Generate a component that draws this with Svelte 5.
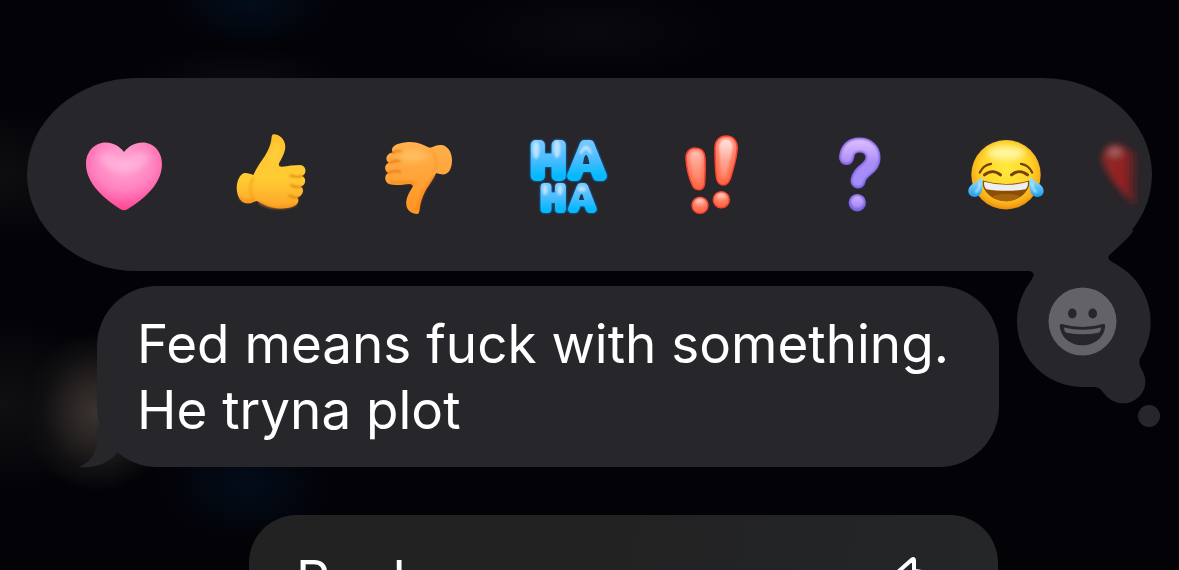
<script>
  const message = ['Fed means fuck with something.', 'He tryna plot'];
  const reactions = ['Heart', 'Like', 'Dislike', 'Laugh', 'Emphasize', 'Question', 'Tears of joy', 'Red heart'];
</script>

{#snippet heart()}
  <path fill="url(#pinkHeart)" d="M50 28C45 22 39 18.500 32 18.500 20 18.500 12 28 12 40c0 20 19 35 34.500 45.200q3.500 2 7 0C70 75 88 60 88 40c0-12-8-21.500-19.500-21.500C61 18.500 55 22 50 28Z" />
  <path d="M24 34q5-8 14-4l12 9 12-9q9-4 14 4-10 15-26 15T24 34Z" fill="#ffc0e0" opacity=".5" filter="url(#mid)" />
{/snippet}

{#snippet thumbUp()}
  <path fill="url(#yellowHand)" d="M52.300 10.200C58 10 64.500 15 64.300 23 64 30 59.500 36 58 39.500c-.5 2 .5 3.200 2.700 3.200C67 42 73 41 79 41c7 .5 7 9.500 1.700 11 5.300 1.500 4.300 9.500-1 10.700 4.500 2 2 9.500-3.400 10.600 2.500 3.500.7 7-3.300 8.700-5 2.300-11 2.800-17.300 2.300-8-.8-14-4.500-20-7.300-3 .5-6 2.800-10 2.300-6-.7-10-7.300-10-15 0-7 3-13.500 7-15 3.300-.8 6.600.7 9.600 1.700C35 45.500 38 40 42.300 34.300 46.500 28 50 21 50.500 14c.2-2 .5-3.500 1.800-3.800Z" />
  <path d="M33 53c-4 6-5 15 0 23" fill="none" stroke="#f09a16" stroke-width="3" opacity=".45" filter="url(#fine)" />
  <path d="M69 51.500q6 2 12 .6M70 61q5 3 10 1.700M68 71.500q5 3 9 1.900" fill="none" stroke="#e5780c" stroke-width="1.600" stroke-linecap="round" filter="url(#fine)" />
  <path d="M38 78q10 6 20 5.500 11 0 17-3.500M19 73q3 5 8 4.500l7-2" fill="none" stroke="#f48a1a" stroke-width="3" opacity=".6" filter="url(#fine)" />
  <path d="M57 19q0 10-8 20" fill="none" stroke="#ffe05a" stroke-width="5" opacity=".5" filter="url(#mid)" />
{/snippet}

{#snippet thumbDown()}
  <path fill="url(#orangeHand)" d="M24.700 28.700C21.500 22 29 19 40.300 18 50 17.500 56 21.500 62 23.700c4-1 7-3.200 11.700-2.700C80 22 84 28.500 84 36c0 7.500-2.500 13-7 14.300-3 .5-6-.5-9-1-2.500 6-7 11-11 18.400-3 5.500-4.500 11-5.200 16.600-.3 3-.8 5.700-2.500 5.700-5 .3-10.300-3.500-11-9-.6-7.500 3-12.500 6.400-18.300.5-1.800-1-2.700-3.700-2.700-6 .5-13 2-19.300.3-5-1.200-6.300-9.300-1.400-11.300-4.300-2-4.300-9 .7-10.300-4.500-2.500-3-9 2.700-10Z" />
  <path d="M24.700 28.700q5-2.700 9-1.200M22 38.700q5-2.500 10-1.500M20.300 49q5-3 12-1.500" fill="none" stroke="#e96a04" stroke-width="1.600" stroke-linecap="round" filter="url(#fine)" />
  <path d="M64 26q6 9 4 21" fill="none" stroke="#f58a1e" stroke-width="2" opacity=".45" filter="url(#fine)" />
  <path d="M22 58q10 1 22 0l3 3M66 51q-3 6-9 14-5 9-7 20" fill="none" stroke="#f3700a" stroke-width="2" opacity=".55" filter="url(#fine)" />
  <ellipse cx="45" cy="32" rx="14" ry="6" fill="#ffc76c" opacity=".7" filter="url(#mid)" />
{/snippet}

{#snippet laugh()}
  <text class="haha" x="17 57" y="52" font-size="45" stroke-width="10">HA</text>
  <text class="haha" x="27 57" y="85" font-size="31" stroke-width="8">HA</text>
  <g fill="#1d3a52">
    <path d="M71 31q2 0 3.500 9h-6.500q1-9 3-9Z" />
    <path d="M66.500 70q1.500 0 2.500 6h-5q1-6 2.500-6Z" />
  </g>
  <g fill="#d6edff" opacity=".75" filter="url(#fine)">
    <ellipse cx="21" cy="26" rx="3.500" ry="9" />
    <ellipse cx="42" cy="25" rx="3.500" ry="9" />
    <path d="M66 26q4-8 9-2l2 6h-2q-4-8-8 0h-3Z" />
    <ellipse cx="30" cy="66" rx="2.500" ry="5" />
    <ellipse cx="45" cy="66" rx="2.500" ry="5" />
    <ellipse cx="67" cy="65" rx="4" ry="2.500" />
  </g>
{/snippet}

{#snippet emphasize()}
  <g fill="url(#redMark)" stroke="#f8412f" stroke-width="1.500">
    <path d="M33 24c-6 0-9.500 5-9 11 .6 9 3 19 6.500 26.500C32 65 34 65.700 37 65.700c4 0 5.500-3 5.700-8 .4-8 .8-16 .3-24-.4-6-4-9.700-10-9.700Z" />
    <path d="M64.500 12c-7 0-11.500 4.500-11.500 12 0 10 .2 19 1.200 28 .6 6 2.800 9 7 9 4.500 0 6.500-3.500 8-9 2.500-9 5.800-19 6-28 .2-7-4.200-12-10.700-12Z" />
    <circle cx="38" cy="81.300" r="8" />
    <circle cx="59.300" cy="75.700" r="8" />
  </g>
  <g fill="url(#redShine)" filter="url(#fine)">
    <path d="M33 27c-4 0-5.500 4-5 9l4 22h7l1-22c0-6-2-9-7-9ZM64 15c-5 0-7 4-7 9l2 30h5l7-30c0-6-3-9-7-9Z" />
    <ellipse cx="38" cy="79" rx="5" ry="4" />
    <ellipse cx="59.300" cy="73.500" rx="5" ry="4" />
  </g>
{/snippet}

{#snippet question()}
  <g fill="none" stroke-linecap="round" stroke-linejoin="round">
    <path d="M37.500 33.500C38.500 25 43 21 50.500 21c8 0 13.500 5 13.500 12.500 0 12-13.500 12-15 23.500" stroke="#7a60dc" stroke-width="15" />
    <path d="M37.500 33C38.500 25 43 21 50.500 21c8 0 13.500 5 13.500 12.500 0 12-13.500 12-15 23" stroke="url(#purpleMark)" stroke-width="12" filter="url(#fine)" />
  </g>
  <circle cx="48.300" cy="78.700" r="8.700" fill="#7b60df" />
  <circle cx="48.300" cy="78" r="6.500" fill="url(#purpleDot)" filter="url(#fine)" />
{/snippet}

{#snippet joy()}
  <circle cx="50" cy="50.700" r="34.700" fill="url(#face)" />
  <ellipse cx="50" cy="29" rx="19" ry="7" fill="#fffdbb" opacity=".8" filter="url(#mid)" />
  <g fill="none" stroke="#754007" stroke-linecap="round">
    <path d="M23.800 48.500C26 43.500 30 40.500 35 39.800M76.200 48.500C74 43.500 70 40.500 65 39.800" stroke-width="2.200" />
    <path d="M28.500 50.800c5-4.200 11-4.200 16 0M55.500 50.800c5-4.200 11-4.200 16 0" stroke-width="3" />
  </g>
  <path d="M26.700 56.500q23.300 7 46.600 0C75 66 64 77.200 50 77.200S25 66 26.700 56.500Z" fill="#8b4e06" />
  <path d="M36 72q14-4 28 0-6 5.200-14 5.200T36 72Z" fill="#b16d0b" opacity=".7" />
  <path d="M28.200 57.800q21.800 6 43.600 0c.6 3-.4 6-2.300 7.500-12 2-27 2-39 0-1.900-1.500-2.900-4.500-2.300-7.500Z" fill="#eeedf2" />
  <path d="M26.300 53c.5 6 .7 14-2.300 17.600-3 3.500-8.500 3-10.700-.3-2.200-3.800-.4-8 3.700-10.600Q22 57 26.300 53Z" fill="url(#tearFill)" />
  <path d="M73.700 53c-.5 6-.7 14 2.300 17.600 3 3.500 8.500 3 10.700-.3 2.200-3.800.4-8-3.700-10.600Q78 57 73.700 53Z" fill="url(#tearFill)" />
  <path d="M24 59q0 6-4 9M76 59q0 6 4 9" stroke="#e2f8ff" stroke-width="2" stroke-linecap="round" fill="none" opacity=".8" filter="url(#fine)" />
{/snippet}

{#snippet fadingHeart()}
  <g filter="url(#haze)">
    <path d="M0 39C-3 29 4 19 13 20c8 1 10 7 19 7l3 8-1 45h-5C20 69 6 56 0 39Z" fill="url(#darkRed)" />
    <ellipse cx="12" cy="28" rx="7" ry="5" fill="#a98482" opacity=".6" />
  </g>
{/snippet}

<svg class="defs" aria-hidden="true">
  <defs>
    <filter id="mid" x="-50%" y="-50%" width="200%" height="200%"><feGaussianBlur stdDeviation="3" /></filter>
    <filter id="fine" x="-50%" y="-50%" width="200%" height="200%"><feGaussianBlur stdDeviation="1" /></filter>
    <filter id="haze" x="-50%" y="-50%" width="200%" height="200%"><feGaussianBlur stdDeviation="3" /></filter>
    <radialGradient id="pinkHeart" cx=".5" cy=".3" r=".72">
      <stop offset="0" stop-color="#ffabd5" /><stop offset=".55" stop-color="#ff83c0" /><stop offset="1" stop-color="#ff3f92" />
    </radialGradient>
    <linearGradient id="yellowHand" x2="0" y2="1">
      <stop offset="0" stop-color="#ffc02c" /><stop offset=".6" stop-color="#ffcc33" /><stop offset="1" stop-color="#fda428" />
    </linearGradient>
    <linearGradient id="orangeHand" x2="0" y2="1">
      <stop offset="0" stop-color="#ffb04e" /><stop offset=".45" stop-color="#ffa53a" /><stop offset="1" stop-color="#ff9420" />
    </linearGradient>
    <linearGradient id="blueTop" x2="0" y2="1">
      <stop offset=".1" stop-color="#7cc9ff" /><stop offset=".5" stop-color="#46bcff" /><stop offset=".8" stop-color="#05b9ff" />
    </linearGradient>
    <linearGradient id="redMark" x2="0" y2="1">
      <stop offset="0" stop-color="#ff8b78" /><stop offset="1" stop-color="#ff6844" />
    </linearGradient>
    <linearGradient id="redShine" x2="0" y2="1">
      <stop offset="0" stop-color="#ffe6e0" /><stop offset=".5" stop-color="#ffa795" /><stop offset="1" stop-color="#ff7c5a" />
    </linearGradient>
    <linearGradient id="purpleMark" gradientUnits="userSpaceOnUse" x1="50" y1="14" x2="50" y2="64">
      <stop offset="0" stop-color="#e0c2ff" /><stop offset=".5" stop-color="#ab8cf8" /><stop offset="1" stop-color="#a28ffc" />
    </linearGradient>
    <linearGradient id="purpleDot" x2="0" y2="1"><stop offset="0" stop-color="#d3b5fd" /><stop offset="1" stop-color="#9d84f8" /></linearGradient>
    <radialGradient id="face" cx=".5" cy=".42" r=".6">
      <stop offset="0" stop-color="#ffe93d" /><stop offset=".6" stop-color="#ffd429" /><stop offset=".85" stop-color="#f9ad18" /><stop offset="1" stop-color="#e38209" />
    </radialGradient>
    <linearGradient id="tearFill" x2="0" y2="1"><stop offset="0" stop-color="#a5e6ff" /><stop offset="1" stop-color="#1b9cec" /></linearGradient>
    <linearGradient id="darkRed"><stop offset="0" stop-color="#8a2a28" /><stop offset=".6" stop-color="#942120" /><stop offset="1" stop-color="#942120" stop-opacity=".1" /></linearGradient>
  </defs>
</svg>

<main>
  <div class="tapbacks" role="toolbar" aria-label="Reactions">
    {#each reactions as name, i}
      <button class="reaction" aria-label={name}>
        <svg viewBox="0 0 100 100" aria-hidden="true">
          {#if i === 0}{@render heart()}
          {:else if i === 1}{@render thumbUp()}
          {:else if i === 2}{@render thumbDown()}
          {:else if i === 3}{@render laugh()}
          {:else if i === 4}{@render emphasize()}
          {:else if i === 5}{@render question()}
          {:else if i === 6}{@render joy()}
          {:else}{@render fadingHeart()}{/if}
        </svg>
      </button>
    {/each}
  </div>

  <div class="row">
    <div class="bubble">
      <p>{#each message as line}<span>{line}</span>{/each}</p>
      <svg class="tail" viewBox="0 0 40 40" aria-hidden="true"><path d="M18 0v12C18 26 11 36 0 39.500 14 42 29 37 38 26L40 0Z" /></svg>
    </div>
    <button class="picker" aria-label="Choose emoji">
      <svg viewBox="0 0 143 171" aria-hidden="true">
        <path fill="#27262b" d="M4 10v5h7c5 0 6.500 2.500 5 6C14 25 10.500 29 8 34A65.500 65.500 0 0 0 65.500 131H76c5 0 8 2 11 6.500 8 10 20 12.500 30 7 11-6.500 14-18 9-28.500-2.500-5-5-8-3-14A65.500 65.500 0 0 0 101 9.500C96 6 88 3.500 93-1.500 100-8 110-16 117-26L60-20Z" />
        <circle cx="132" cy="160" r="11" fill="#27262b" />
        <circle cx="65.500" cy="65.500" r="34" fill="#636267" />
        <g fill="#27262b">
          <ellipse cx="55.300" cy="57.500" rx="4.300" ry="5" />
          <ellipse cx="75.700" cy="57.500" rx="4.300" ry="5" />
          <path d="M45 68q20.500 6 41 0c1.500-.4 2.300.4 2.200 2C87.500 81 78 89.300 65.500 89.300S43.500 81 42.800 70c-.1-1.600.7-2.400 2.200-2Z" />
        </g>
        <path fill="#636267" d="M47 71.500q18.500 4.500 37 0c.2 2.500-.8 4.500-2.500 5.200q-16 3.200-32 0c-1.700-.7-2.700-2.700-2.500-5.200Z" />
      </svg>
    </button>
  </div>

  <div class="menu" role="menu">
    <button role="menuitem">
      <span>Reply</span>
      <svg viewBox="0 0 56 48" aria-hidden="true"><path d="M26 3.500 4 23q-1.500 1.500 0 3L26 45.500q2 1.500 2-1V34c12-1 19 2 24 9 0-15-8-28-24-28V4.500q0-2.500-2-1Z" /></svg>
    </button>
  </div>
</main>

<style>
  :global(body) { margin: 0; background: #030207; }
  .defs { position: absolute; width: 0; height: 0; }
  main {
    box-sizing: border-box;
    height: 100vh;
    overflow: hidden;
    padding: 78px 27px 0;
    display: flex;
    flex-direction: column;
    font-family: Inter, "Liberation Sans", sans-serif;
    color: #fff;
    background:
      radial-gradient(ellipse 75px 80px at 97px 412px, #3b3430 0, #2a2523 35%, #0f0e10 75%, transparent 100%),
      radial-gradient(ellipse 90px 60px at 246px 484px, #020c19 0, transparent 100%),
      radial-gradient(ellipse 90px 50px at 250px 0, #020d1b 0, transparent 100%),
      radial-gradient(ellipse 110px 34px at 240px 80px, #0b0a0f 0, transparent 100%),
      radial-gradient(ellipse 150px 50px at 590px 32px, #09080d 0, transparent 100%),
      radial-gradient(ellipse 110px 70px at 0 175px, #0e0d0f 0, transparent 100%),
      radial-gradient(ellipse 120px 90px at 0 405px, #100f11 0, transparent 100%),
      #030207;
  }
  button { border: 0; padding: 0; margin: 0; background: none; color: inherit; font: inherit; cursor: pointer; }
  svg { display: block; overflow: visible; }
  .tapbacks {
    display: flex;
    flex: none;
    gap: 47px;
    padding: 46px 0 47px 47px;
    overflow: hidden;
    background: #27262b;
    border-radius: 110px / 50%;
  }
  .reaction { flex: 0 0 100px; height: 100px; }
  .haha {
    font-family: "Liberation Sans", sans-serif;
    fill: url(#blueTop);
    stroke: url(#blueTop);
    stroke-linejoin: round;
    filter: drop-shadow(0 0 1px #0090ff);
  }
  .row { display: flex; flex: none; gap: 18px; margin: 15px 0 0 70px; }
  .bubble {
    position: relative;
    flex: 1;
    min-width: 0;
    padding: 25px 40px 24px;
    border-radius: 60px;
    background: #27262b;
  }
  p { margin: 0; font-size: 53px; line-height: 66px; }
  p span { display: block; white-space: nowrap; }
  .tail { position: absolute; left: -18px; bottom: 0; width: 40px; height: 40px; fill: #27262b; }
  .picker { position: relative; flex: 0 0 135px; height: 141px; }
  .picker svg { position: absolute; left: 0; bottom: 0; width: 143px; height: 171px; }
  .menu {
    flex: none;
    margin: 48px 154px 0 222px;
    border-radius: 48px;
    background: linear-gradient(100deg, #222223 0, #222223 50%, #242628 100%);
  }
  .menu button {
    display: flex;
    width: 100%;
    align-items: center;
    justify-content: space-between;
    padding: 32px 56px 32px 47px;
    font-size: 53px;
    line-height: 66px;
  }
  .menu svg { width: 56px; height: 48px; fill: none; stroke: #fff; stroke-width: 4; stroke-linejoin: round; }
</style>
